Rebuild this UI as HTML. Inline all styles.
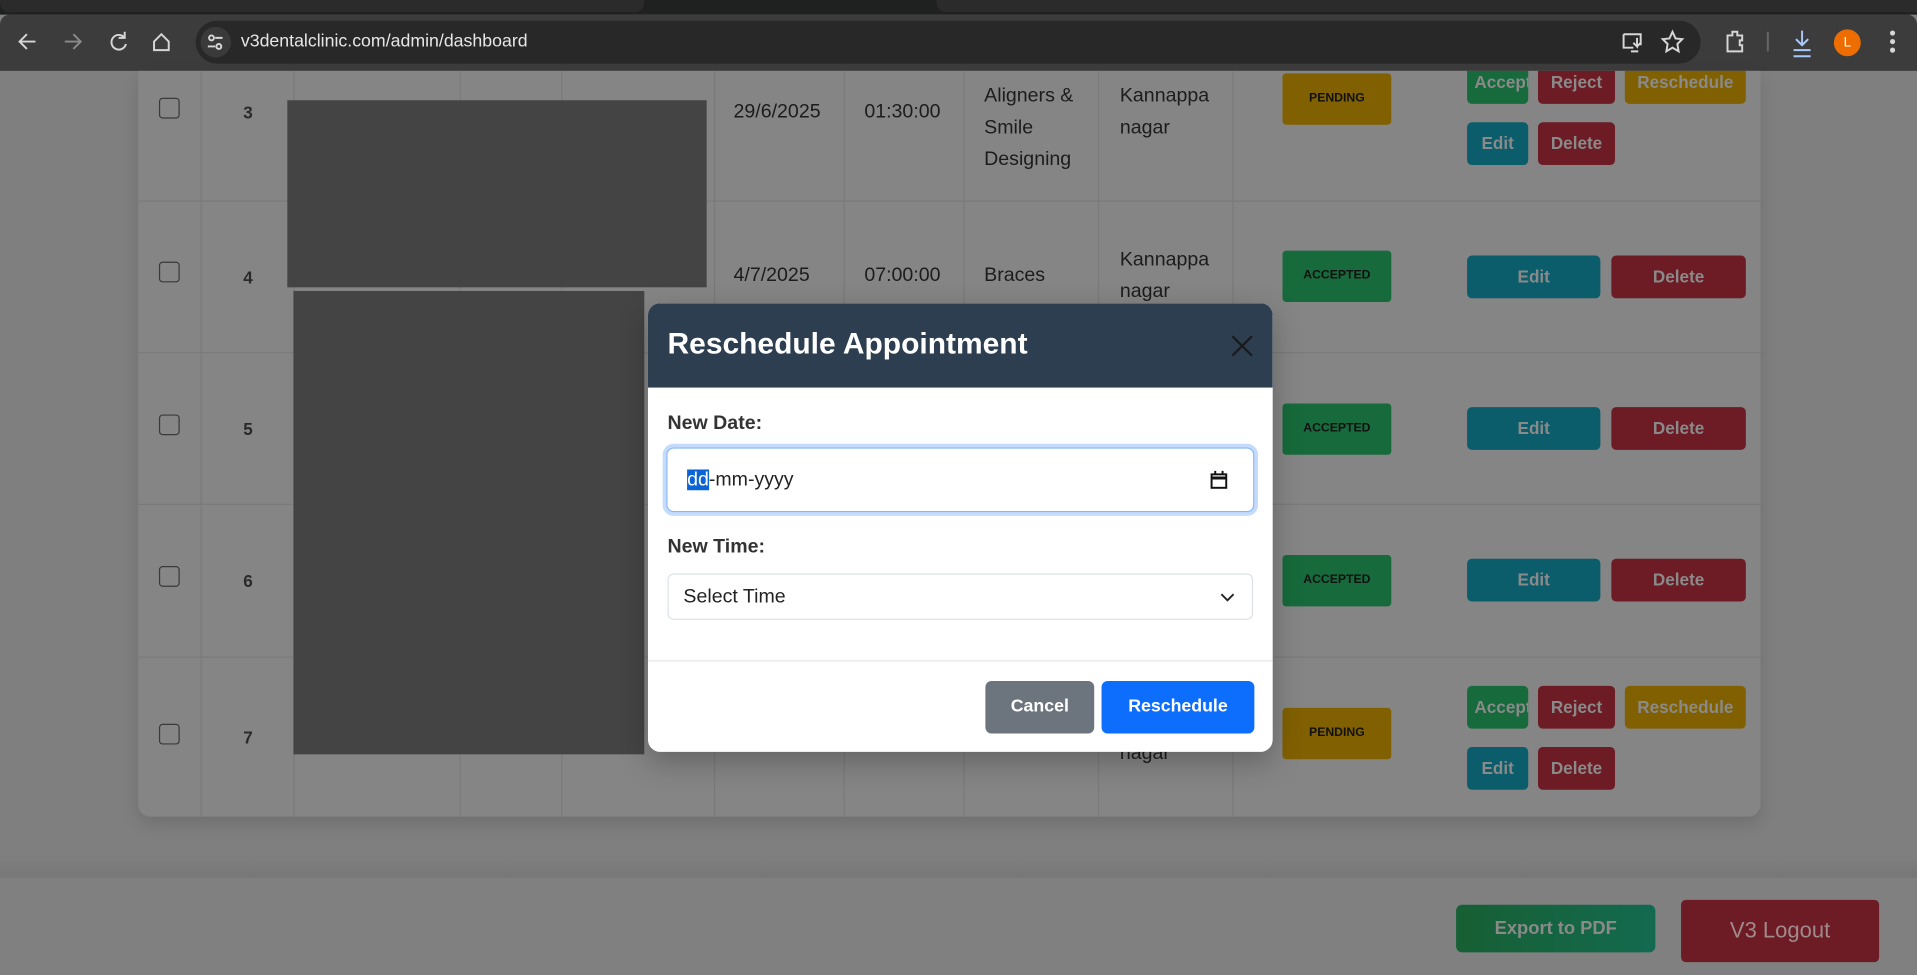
<!DOCTYPE html>
<html><head><meta charset="utf-8"><style>
*{box-sizing:border-box;margin:0;padding:0}
html,body{width:1917px;height:975px;overflow:hidden;background:#7f7f7f;font-family:"Liberation Sans",Arial,sans-serif}
#w{position:absolute;left:0;top:0;width:1568px;height:797px;transform:scale(1.22258);transform-origin:0 0;background:#7f7f7f}
.a{position:absolute}
.vl{position:absolute;top:58px;height:610px;width:1px;background:#7a7a7a}
.hl{position:absolute;left:113px;width:1067px;height:1px;background:#7a7a7a}
.t{position:absolute;font-size:16px;color:#1c1c1c;line-height:26px}
.n{position:absolute;font-size:14px;font-weight:bold;color:#2a2a2a}
.cb{position:absolute;left:130px;width:17px;height:17px;border:1.5px solid #3a3a3a;border-radius:3px;background:#868686}
.b{position:absolute;border-radius:4px;font-size:14px;font-weight:bold;text-align:center;color:#8a8a8a;overflow:hidden;white-space:nowrap}
.bd{position:absolute;left:1049px;width:89px;height:42px;border-radius:3px;font-size:10px;font-weight:bold;text-align:center;line-height:42px;color:#111}
.ed{background:#0b5d6b}.de{background:#6d1b24}.ac{background:#176a3c}.rs{background:#806000}
.cl{text-align:left;padding-left:6px}
</style></head><body><div id="w">
<div class="a" style="left:0;top:0;width:1568px;height:12px;background:#1f2020"></div>
<div class="a" style="left:0;top:0;width:527px;height:10px;background:#2b2b2b;border-radius:0 0 8px 8px"></div>
<div class="a" style="left:766px;top:0;width:802px;height:10px;background:#2b2b2b;border-radius:0 0 0 8px"></div>
<div class="a" style="left:0;top:12px;width:1568px;height:46px;background:#3c3c3c;border-radius:8px 8px 0 0"></div>
<div class="a" style="left:160px;top:17px;width:1231px;height:35px;background:#282828;border-radius:18px"></div>
<div class="a" style="left:164px;top:22px;width:25px;height:25px;background:#3a3a3a;border-radius:50%"></div>
<div class="a" style="left:197px;top:26px;font-size:14.5px;color:#e6e6e6">v3dentalclinic.com/admin/dashboard</div>
<svg class="a" style="left:0;top:12px" width="1568" height="46" fill="none" stroke="#d6d6d6" stroke-width="1.6">
<path d="M29 22H16M22 16l-6 6 6 6"/><path d="M53 22h13M60 16l6 6-6 6" stroke="#8a8a8a"/>
<path d="M102 19a6 6 0 1 0 1 5M102 14v5h-5"/><path d="M126 22l6-6 6 6v7h-12z"/>
<circle cx="173" cy="19" r="2"/><circle cx="179" cy="26" r="2"/><path d="M170 26h6M176 19h6"/>
<path d="M1328 16h14v9M1328 16v11h8M1334 30h6M1339 19v7l-3-3M1339 26l3-3"/>
<path d="M1368 14l2.5 5.5 5.5.5-4 4 1 6-5-3-5 3 1-6-4-4 5.5-.5z"/>
<path d="M1413 17h4v-3h4v3h4v4h-2v4h2v5h-12z"/>
<path d="M1446 14v16" stroke="#666"/>
<path d="M1474 13v12M1469 20l5 5 5-5M1467 29h14M1467 34h14" stroke="#a8c7fa"/>
<circle cx="1548" cy="15" r="1.3" fill="#ddd"/><circle cx="1548" cy="22" r="1.3" fill="#ddd"/><circle cx="1548" cy="29" r="1.3" fill="#ddd"/>
</svg>
<div class="a" style="left:1500px;top:24px;width:22px;height:22px;border-radius:50%;background:#ed6d00;color:#fff;font-size:11px;text-align:center;line-height:22px">L</div>
<div class="a" style="left:113px;top:58px;width:1327px;height:610px;background:#858585;border-radius:0 0 10px 10px;box-shadow:0 6px 14px rgba(0,0,0,.12)"></div>
<div class="vl" style="left:164px"></div><div class="vl" style="left:240px"></div><div class="vl" style="left:376px"></div><div class="vl" style="left:459px"></div><div class="vl" style="left:584px"></div><div class="vl" style="left:690px"></div><div class="vl" style="left:788px"></div><div class="vl" style="left:898px"></div><div class="vl" style="left:1008px"></div>
<div class="hl" style="top:164px"></div><div class="hl" style="top:288px"></div><div class="hl" style="top:412px"></div><div class="hl" style="top:537px"></div>
<div class="a" style="left:1180px;top:164px;width:260px;height:1px;background:#7a7a7a"></div>
<div class="a" style="left:1180px;top:288px;width:260px;height:1px;background:#7a7a7a"></div>
<div class="a" style="left:1180px;top:412px;width:260px;height:1px;background:#7a7a7a"></div>
<div class="a" style="left:1180px;top:537px;width:260px;height:1px;background:#7a7a7a"></div>
<div class="cb" style="top:80px"></div><div class="cb" style="top:214px"></div><div class="cb" style="top:339px"></div><div class="cb" style="top:463px"></div><div class="cb" style="top:592px"></div>
<div class="n" style="left:199px;top:84px">3</div><div class="n" style="left:199px;top:219px">4</div><div class="n" style="left:199px;top:343px">5</div><div class="n" style="left:199px;top:467px">6</div><div class="n" style="left:199px;top:595px">7</div>
<div class="t" style="left:600px;top:79px">29/6/2025</div><div class="t" style="left:707px;top:79px">01:30:00</div>
<div class="t" style="left:805px;top:66px">Aligners &amp;<br>Smile<br>Designing</div><div class="t" style="left:916px;top:66px">Kannappa<br>nagar</div>
<div class="t" style="left:600px;top:213px">4/7/2025</div><div class="t" style="left:707px;top:213px">07:00:00</div><div class="t" style="left:805px;top:213px">Braces</div>
<div class="t" style="left:916px;top:200px">Kannappa<br>nagar</div>
<div class="t" style="left:916px;top:604px">nagar</div>
<div class="a" style="left:235px;top:82px;width:343px;height:153px;background:#444"></div>
<div class="a" style="left:240px;top:238px;width:287px;height:379px;background:#444"></div>
<div class="bd rs" style="top:60px">PENDING</div>
<div class="bd ac" style="top:205px">ACCEPTED</div>
<div class="bd ac" style="top:330px">ACCEPTED</div>
<div class="bd ac" style="top:454px">ACCEPTED</div>
<div class="bd rs" style="top:579px">PENDING</div>
<div class="b ac cl" style="left:1200px;top:58px;width:50px;height:27px;line-height:18px;border-radius:0 0 4px 4px">Accept</div>
<div class="b de" style="left:1258px;top:58px;width:63px;height:27px;line-height:18px;border-radius:0 0 4px 4px">Reject</div>
<div class="b rs" style="left:1329px;top:58px;width:99px;height:27px;line-height:18px;border-radius:0 0 4px 4px">Reschedule</div>
<div class="b ed" style="left:1200px;top:100px;width:50px;height:35px;line-height:35px">Edit</div>
<div class="b de" style="left:1258px;top:100px;width:63px;height:35px;line-height:35px">Delete</div>
<div class="b ed" style="left:1200px;top:209px;width:109px;height:35px;line-height:35px">Edit</div>
<div class="b de" style="left:1318px;top:209px;width:110px;height:35px;line-height:35px">Delete</div>
<div class="b ed" style="left:1200px;top:333px;width:109px;height:35px;line-height:35px">Edit</div>
<div class="b de" style="left:1318px;top:333px;width:110px;height:35px;line-height:35px">Delete</div>
<div class="b ed" style="left:1200px;top:457px;width:109px;height:35px;line-height:35px">Edit</div>
<div class="b de" style="left:1318px;top:457px;width:110px;height:35px;line-height:35px">Delete</div>
<div class="b ac cl" style="left:1200px;top:561px;width:50px;height:35px;line-height:35px">Accept</div>
<div class="b de" style="left:1258px;top:561px;width:63px;height:35px;line-height:35px">Reject</div>
<div class="b rs" style="left:1329px;top:561px;width:99px;height:35px;line-height:35px">Reschedule</div>
<div class="b ed" style="left:1200px;top:611px;width:50px;height:35px;line-height:35px">Edit</div>
<div class="b de" style="left:1258px;top:611px;width:63px;height:35px;line-height:35px">Delete</div>
<div class="a" style="left:0;top:700px;width:1568px;height:18px;background:linear-gradient(#7f7f7f,#777)"></div>
<div class="a" style="left:0;top:718px;width:1568px;height:79px;background:#808080"></div>
<div class="b" style="left:1191px;top:740px;width:163px;height:39px;line-height:39px;font-size:15px;background:linear-gradient(90deg,#175f34,#136a4f);color:#8a8a8a;border-radius:5px">Export to PDF</div>
<div class="b de" style="left:1375px;top:736px;width:162px;height:51px;line-height:51px;font-size:18px;font-weight:normal;color:#a08a8c;border-radius:4px">V3 Logout</div>
<div class="a" style="left:530px;top:248px;width:511px;height:367px;background:#fff;border-radius:10px;overflow:hidden;box-shadow:0 8px 24px rgba(0,0,0,.25)">
<div class="a" style="left:0;top:0;width:511px;height:69px;background:#2c3e50"></div>
<div class="a" style="left:16px;top:20px;font-size:24.5px;font-weight:bold;color:#fff">Reschedule Appointment</div>
<svg class="a" style="left:477px;top:26px" width="18" height="18" stroke="#1a1a1a" stroke-width="1.8"><path d="M1 1l16 16M17 1L1 17"/></svg>
<div class="a" style="left:16px;top:90px;font-size:16px;font-weight:bold;color:#333">New Date:</div>
<div class="a" style="left:15px;top:118px;width:481px;height:53px;border:1px solid #86b7fe;border-radius:6px;box-shadow:0 0 0 3px #c5dbfc"></div>
<div class="a" style="left:32px;top:136px;font-size:16px;color:#222"><span style="background:#0a64d8;color:#fff">dd</span>-mm-yyyy</div>
<svg class="a" style="left:460px;top:137px" width="14" height="16" fill="none" stroke="#111" stroke-width="1.6"><rect x="1" y="3" width="12" height="11"/><path d="M1 6h12" stroke-width="2.5"/><path d="M4 0v3M10 0v3"/></svg>
<div class="a" style="left:16px;top:191px;font-size:16px;font-weight:bold;color:#333">New Time:</div>
<div class="a" style="left:16px;top:221px;width:479px;height:38px;border:1px solid #dee2e6;border-radius:5px"></div>
<div class="a" style="left:29px;top:232px;font-size:16px;color:#222">Select Time</div>
<svg class="a" style="left:468px;top:237px" width="12" height="8" fill="none" stroke="#222" stroke-width="1.5"><path d="M1 1l5 5 5-5"/></svg>
<div class="a" style="left:0;top:292px;width:511px;height:1px;background:#e6e6e6"></div>
<div class="b" style="left:276px;top:309px;width:89px;height:43px;line-height:43px;background:#6c757d;color:#fff;border-radius:5px;font-size:14.5px">Cancel</div>
<div class="b" style="left:371px;top:309px;width:125px;height:43px;line-height:43px;background:#0d6efd;color:#fff;border-radius:5px;font-size:14.5px">Reschedule</div>
</div>
</div></body></html>
